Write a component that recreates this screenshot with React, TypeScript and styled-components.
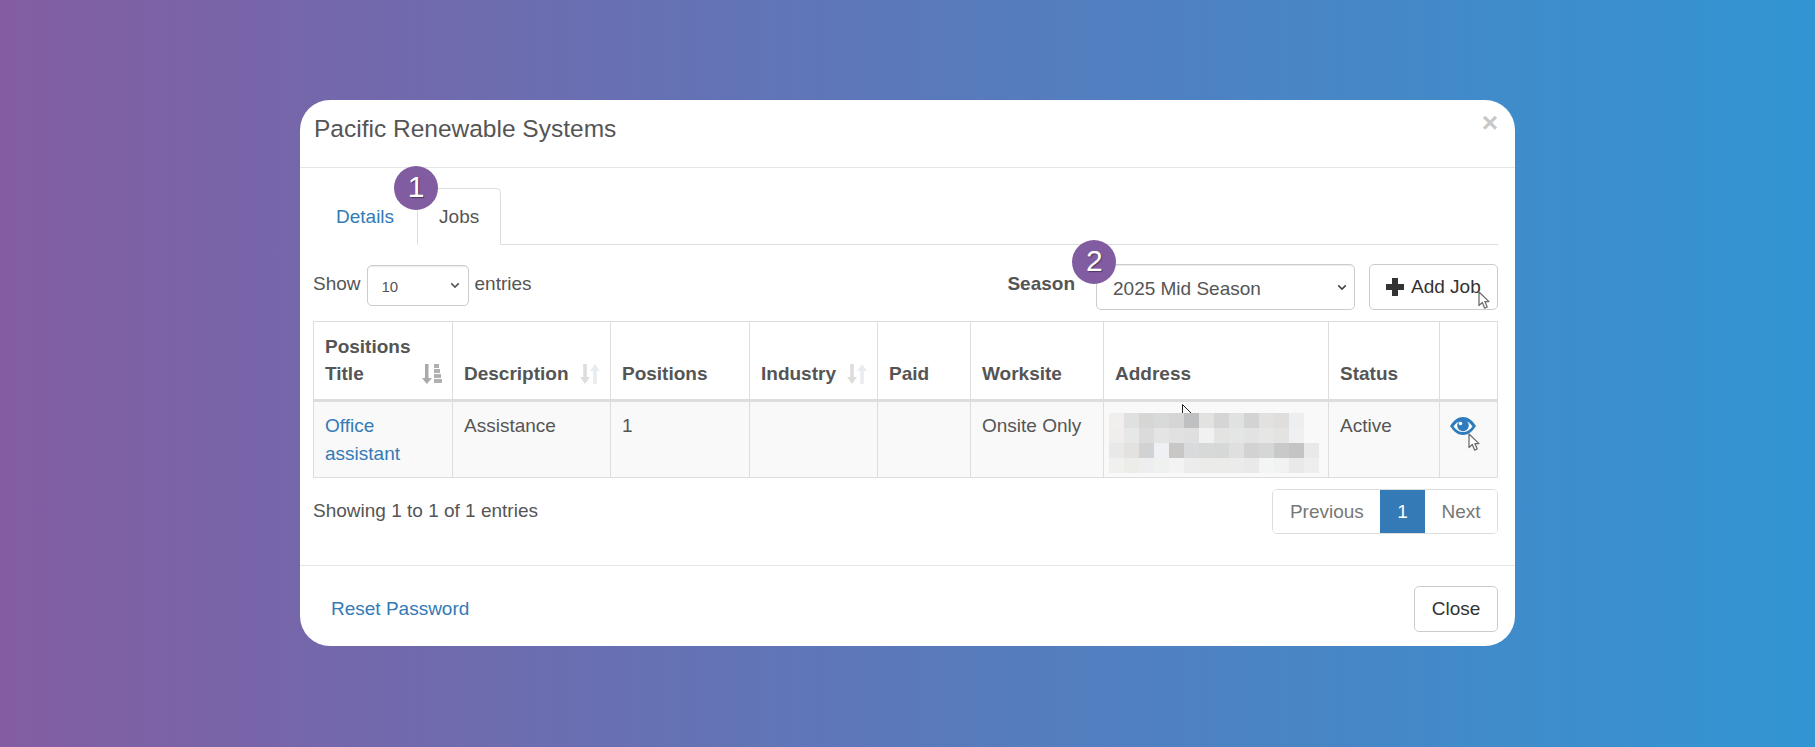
import React from "react";
import styled, { createGlobalStyle } from "styled-components";

const chevron = (color: string) =>
  `url("data:image/svg+xml,%3Csvg xmlns='http://www.w3.org/2000/svg' width='12' height='8' viewBox='0 0 12 8'%3E%3Cpath d='M1.5 1.5 6 6l4.5-4.5' fill='none' stroke='%23${color}' stroke-width='1.9'/%3E%3C/svg%3E")`;

const addressPixels = [
  ["f0efed", "dfe1e0", "d6d6d5", "d8dad9", "d5d5d6", "bfc0c2", "e2e2e1", "d5d5d6", "e0e1e1", "d3d3d4", "e2e1df", "dfdedc", "eceef0"],
  ["efeeec", "e6e8e8", "dbdbdb", "e4e4e4", "e1e1e1", "dfdfdf", "f1f1f1", "e3e3e1", "e4e5e5", "e2e2e2", "e6e6e4", "e3e3e1", "eef0f2"],
  ["e8e8e8", "e3e2e0", "d1d2d4", "eef0f4", "c9c7c5", "d9dadc", "d7d9d8", "d6d8d7", "dfdfdf", "d2d2d2", "d5d6d6", "c9c9c9", "c4c4c4", "e8eaea"],
  ["f0f0ef", "ecece9", "eeeeee", "eff1f1", "f3f3f3", "ebeceb", "ebebea", "ebebe9", "ebebeb", "e8e9e8", "f3f5f4", "f1f2f1", "e9e9e9", "eeeeee"],
];

const SortAsc = () => (
  <SortSvg viewBox="0 0 20 20">
    <path d="M3 0h3.500v14H10l-5.200 6L0 14h3z" fill="#aaa" />
    <path d="M12 0h5v4h-5zM12 5h6v4h-6zM12 10h7v4h-7zM12 15h8v4h-8z" fill="#b0b0b0" />
  </SortSvg>
);

const SortBoth = () => (
  <SortSvg viewBox="0 0 20 20">
    <path d="M3.2 0h3.600v13H10l-5 7-5-7h3.200z" fill="#ddd" />
    <path d="M13.200 20h3.600V7H20l-5-7-5 7h3.200z" fill="#e9ecef" />
  </SortSvg>
);

const Cursor = () => (
  <svg width="14" height="19" viewBox="0 0 14 19">
    <path
      d="M1 1v13.5l3.3-3 2.3 5.6 2.6-1.1-2.3-5.4H11z"
      fill="#fff"
      stroke="#6d6d6d"
      strokeWidth="1.3"
      strokeLinejoin="round"
    />
  </svg>
);

const App: React.FC = () => {
  return (
    <Page>
      <GlobalStyle />
      <Modal>
        <Header>
          <Title>Pacific Renewable Systems</Title>
          <Dismiss>×</Dismiss>
        </Header>

        <Body>
          <Tabs>
            <Tab>Details</Tab>
            <Tab active>Jobs</Tab>
            <BadgeOne>1</BadgeOne>
          </Tabs>

          <Controls>
            <LengthGroup>
              Show
              <LengthSelect defaultValue="10">
                <option>10</option>
              </LengthSelect>
              entries
            </LengthGroup>

            <SeasonGroup>
              <BadgeTwo>2</BadgeTwo>
              <SeasonLabel>Season</SeasonLabel>
              <SeasonSelect defaultValue="2025 Mid Season">
                <option>2025 Mid Season</option>
              </SeasonSelect>
              <AddButton>
                <svg width="18" height="18" viewBox="0 0 18 18">
                  <path d="M6 0h6v6h6v6h-6v6H6v-6H0V6h6z" fill="#333" />
                </svg>
                Add Job
                <AddCursor>
                  <Cursor />
                </AddCursor>
              </AddButton>
            </SeasonGroup>
          </Controls>

          <JobsTable>
            <colgroup>
              <col width={139} />
              <col width={158} />
              <col width={139} />
              <col width={128} />
              <col width={93} />
              <col width={133} />
              <col width={225} />
              <col width={111} />
              <col width={58} />
            </colgroup>
            <thead>
              <tr>
                <Th>
                  <ThInner>
                    <span>
                      Positions
                      <br />
                      Title
                    </span>
                    <SortAsc />
                  </ThInner>
                </Th>
                <Th>
                  <ThInner>
                    Description
                    <SortBoth />
                  </ThInner>
                </Th>
                <Th>Positions</Th>
                <Th>
                  <ThInner>
                    Industry
                    <SortBoth />
                  </ThInner>
                </Th>
                <Th>Paid</Th>
                <Th>Worksite</Th>
                <Th>Address</Th>
                <Th>Status</Th>
                <Th />
              </tr>
            </thead>
            <tbody>
              <tr>
                <Td>
                  <Link>Office assistant</Link>
                </Td>
                <Td>Assistance</Td>
                <Td>1</Td>
                <Td />
                <Td />
                <Td>Onsite Only</Td>
                <AddressCell>
                  <StrayCursor width="11" height="12" viewBox="0 0 11 12">
                    <path d="M.5.5v11M.5.5l10 10" fill="none" stroke="#222" strokeWidth="1" />
                  </StrayCursor>
                  <PixelBlock width="210" height="60" viewBox="0 0 14 4" shapeRendering="crispEdges">
                    {addressPixels.map((row, y) =>
                      row.map((color, x) => (
                        <rect key={`${x}-${y}`} x={x} y={y} width="1" height="1" fill={`#${color}`} />
                      ))
                    )}
                  </PixelBlock>
                </AddressCell>
                <Td>Active</Td>
                <ActionCell>
                  <svg width="26" height="18" viewBox="0 0 26 18">
                    <path d="M0 9C4 3 8 0 13 0s9 3 13 9c-4 6-8 9-13 9S4 15 0 9z" fill="#2e7bbd" />
                    <path d="M3.5 9.5C6 6 9 3.5 13 3.5s7 2.500 9.500 6C20 13 17 15 13 15s-7-2-9.500-5.500z" fill="#fff" />
                    <circle cx="13" cy="8.500" r="5.800" fill="#2e7bbd" />
                    <circle cx="10.500" cy="6.500" r="1.800" fill="#fff" />
                  </svg>
                  <EyeCursor>
                    <Cursor />
                  </EyeCursor>
                </ActionCell>
              </tr>
            </tbody>
          </JobsTable>

          <InfoRow>
            <span>Showing 1 to 1 of 1 entries</span>
            <Pagination>
              <PageItem>Previous</PageItem>
              <PageItem current>1</PageItem>
              <PageItem>Next</PageItem>
            </Pagination>
          </InfoRow>
        </Body>

        <Footer>
          <Link>Reset Password</Link>
          <CloseButton>Close</CloseButton>
        </Footer>
      </Modal>
    </Page>
  );
};

const GlobalStyle = createGlobalStyle`
  html, body {
    margin: 0;
    padding: 0;
  }
  * {
    box-sizing: border-box;
  }
  body {
    font-family: "Liberation Sans", Arial, sans-serif;
    font-size: 19px;
    color: #555;
  }
`;

const Page = styled.div`
  min-height: 100vh;
  padding-top: 100px;
  display: flex;
  align-items: flex-start;
  justify-content: center;
  background: linear-gradient(to right, #835da2, #3295d3);
`;

const Modal = styled.div`
  width: 1215px;
  background: #fff;
  border-radius: 30px;
  overflow: hidden;
`;

const Header = styled.div`
  height: 68px;
  padding: 11px 17px 0 14px;
  display: flex;
  justify-content: space-between;
  align-items: flex-start;
  border-bottom: 1px solid #e5e5e5;
`;

const Title = styled.div`
  margin-top: 3px;
  font-size: 24.5px;
  line-height: 30px;
`;

const Dismiss = styled.div`
  font-size: 28px;
  font-weight: bold;
  line-height: 24px;
  color: #c8c8c8;
`;

const Body = styled.div`
  padding: 20px 17px 0 13px;
`;

const Tabs = styled.div`
  position: relative;
  display: flex;
  height: 57px;
  border-bottom: 1px solid #ddd;
`;

const Tab = styled.div<{ active?: boolean }>`
  height: 57px;
  padding: 0 ${(props) => (props.active ? "21px" : "22px")};
  line-height: 56px;
  color: ${(props) => (props.active ? "#555" : "#337ab7")};
  background: #fff;
  border: 1px solid ${(props) => (props.active ? "#ddd" : "transparent")};
  border-bottom-color: ${(props) => (props.active ? "#fff" : "transparent")};
  border-radius: 5px 5px 0 0;
`;

const Badge = styled.div`
  position: absolute;
  z-index: 2;
  width: 44px;
  height: 44px;
  border-radius: 50%;
  background: #825ca1;
  color: #fff;
  font-size: 30px;
  line-height: 42px;
  text-align: center;
  text-shadow: 1px 1px 1px rgba(0, 0, 0, 0.4);
`;

const BadgeOne = styled(Badge)`
  left: 81px;
  top: -22px;
`;

const BadgeTwo = styled(Badge)`
  left: 65px;
  top: -24px;
`;

const Controls = styled.div`
  margin-top: 19px;
  height: 46px;
  display: flex;
  justify-content: space-between;
  align-items: flex-start;
`;

const LengthGroup = styled.div`
  display: flex;
  align-items: flex-start;
  gap: 6px;
  line-height: 40px;
`;

const BaseSelect = styled.select`
  appearance: none;
  font-family: inherit;
  color: #555;
  background-color: #fff;
  background-repeat: no-repeat;
  background-size: 10px 7px;
  border: 1px solid #ccc;
  border-radius: 5px;
  box-shadow: inset 0 1px 1px rgba(0, 0, 0, 0.075);
`;

const LengthSelect = styled(BaseSelect)`
  margin-top: 1px;
  width: 102px;
  height: 41px;
  padding: 2px 0 0 14px;
  font-size: 15px;
  background-image: ${chevron("555")};
  background-position: right 8px center;
`;

const SeasonGroup = styled.div`
  position: relative;
  display: flex;
  align-items: flex-start;
`;

const SeasonLabel = styled.div`
  margin: 9px 21px 0 0;
  font-weight: bold;
`;

const SeasonSelect = styled(BaseSelect)`
  width: 259px;
  height: 46px;
  padding: 2px 0 0 16px;
  font-size: 19px;
  background-image: ${chevron("444")};
  background-position: right 7px center;
`;

const AddButton = styled.button`
  position: relative;
  margin-left: 14px;
  width: 129px;
  height: 46px;
  padding: 0 0 0 16px;
  display: flex;
  align-items: center;
  gap: 7px;
  font-family: inherit;
  font-size: 19px;
  color: #333;
  background: #fff;
  border: 1px solid #ccc;
  border-radius: 5px;
`;

const AddCursor = styled.span`
  position: absolute;
  left: 108px;
  top: 26px;
  line-height: 0;
`;

const JobsTable = styled.table`
  margin-top: 11px;
  width: 1184px;
  table-layout: fixed;
  border-collapse: collapse;
`;

const Th = styled.th`
  height: 77px;
  padding: 11px 10px 12px 11px;
  text-align: left;
  vertical-align: bottom;
  line-height: 27px;
  font-weight: bold;
  border: 1px solid #ddd;
  border-bottom: 3px solid #ddd;
`;

const ThInner = styled.div`
  display: flex;
  align-items: flex-end;
  justify-content: space-between;
`;

const SortSvg = styled.svg`
  flex: none;
  width: 20px;
  height: 20px;
  margin-bottom: 3px;
`;

const Td = styled.td`
  height: 76px;
  padding: 10px 11px 9px;
  vertical-align: top;
  line-height: 28px;
  background: #f9f9f9;
  border: 1px solid #ddd;
`;

const AddressCell = styled(Td)`
  position: relative;
  padding: 11px 0 0 5px;
`;

const StrayCursor = styled.svg`
  position: absolute;
  left: 78px;
  top: 2px;
`;

const PixelBlock = styled.svg`
  position: relative;
  display: block;
`;

const ActionCell = styled(Td)`
  position: relative;
  padding: 15px 0 0 10px;
  line-height: 0;
`;

const EyeCursor = styled.span`
  position: absolute;
  left: 28px;
  top: 31px;
`;

const Link = styled.a`
  color: #337ab7;
`;

const InfoRow = styled.div`
  margin-top: 11px;
  height: 45px;
  display: flex;
  justify-content: space-between;
  align-items: flex-start;
  line-height: 44px;
`;

const Pagination = styled.div`
  display: flex;
  height: 45px;
  border: 1px solid #ddd;
  border-radius: 5px;
  overflow: hidden;
`;

const PageItem = styled.div<{ current?: boolean }>`
  padding: 0 ${(props) => (props.current ? "17px" : "16.5px")};
  line-height: 43px;
  color: ${(props) => (props.current ? "#fff" : "#777")};
  background: ${(props) => (props.current ? "#337ab7" : "#fff")};
`;

const Footer = styled.div`
  margin-top: 31px;
  padding: 20px 17px 14px 31px;
  display: flex;
  justify-content: space-between;
  align-items: center;
  border-top: 1px solid #e5e5e5;
`;

const CloseButton = styled.button`
  width: 84px;
  height: 46px;
  padding: 0;
  font-family: inherit;
  font-size: 19px;
  color: #333;
  background: #fff;
  border: 1px solid #ccc;
  border-radius: 5px;
`;

export default App;
